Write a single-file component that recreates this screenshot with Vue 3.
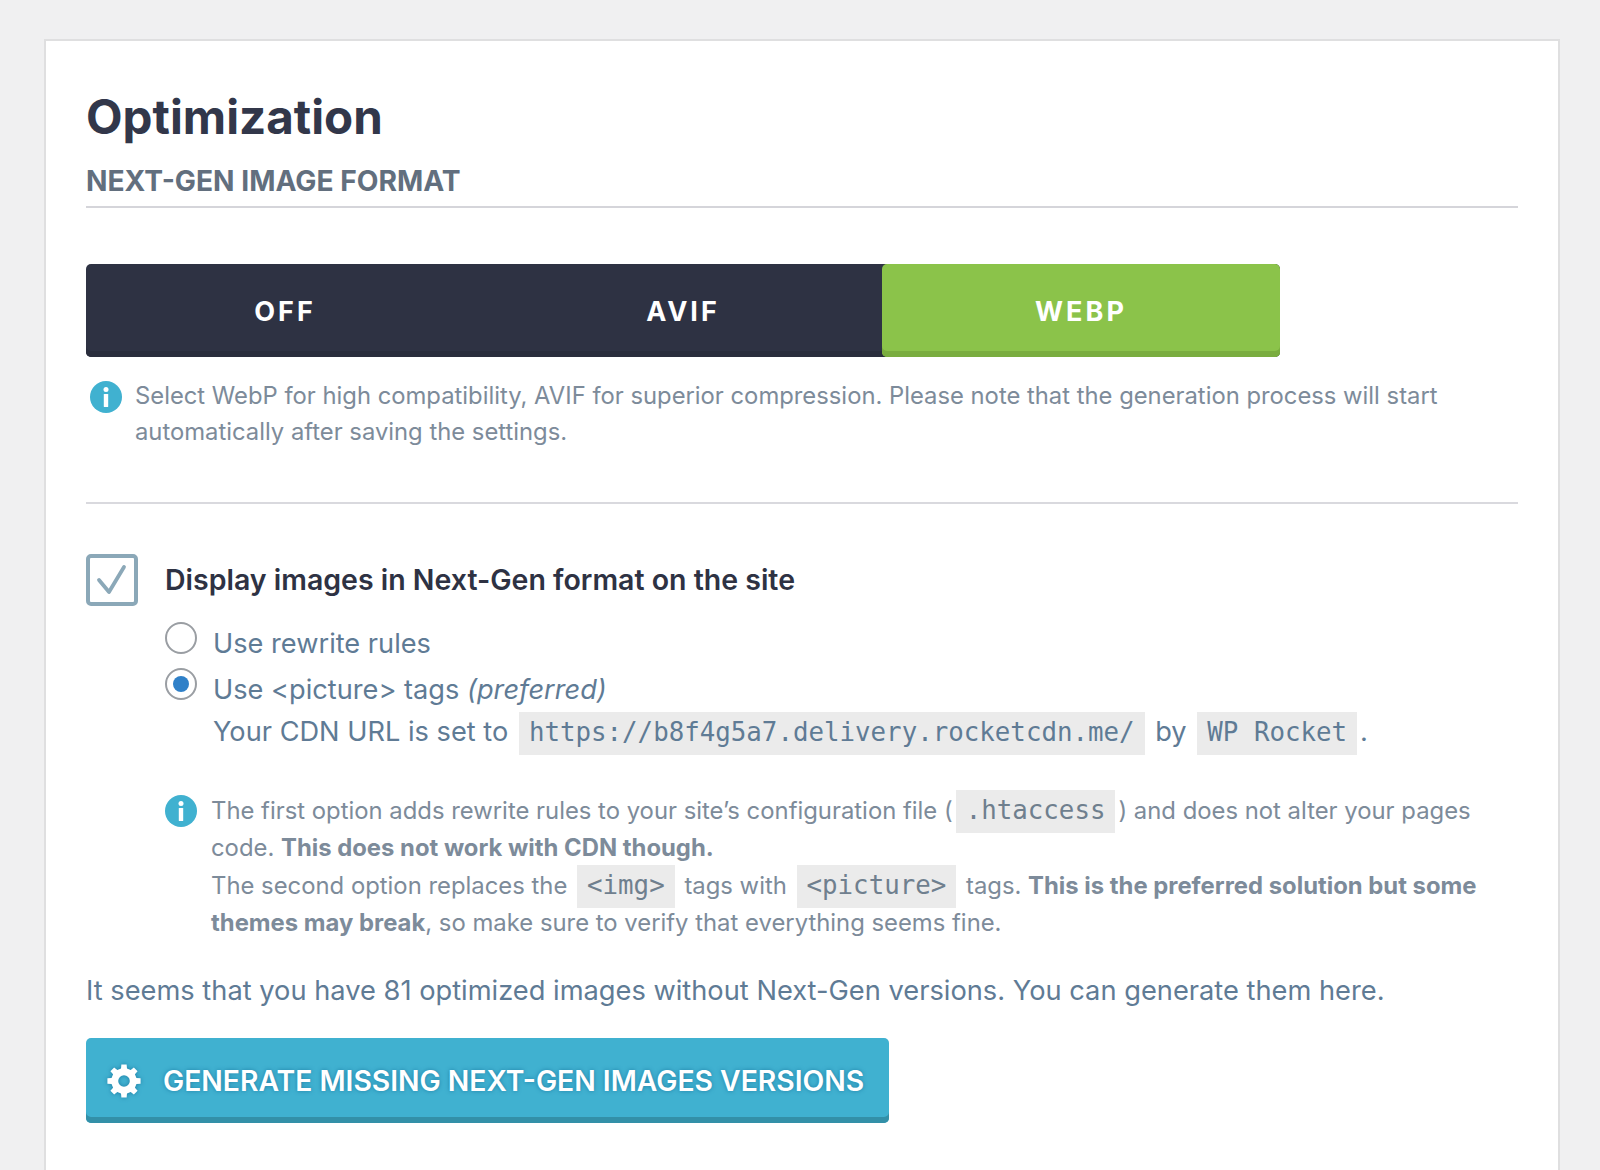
<script setup>
const teeth = 8
const pts = []
for (let i = 0; i < teeth; i++) {
  const a = (i / teeth) * Math.PI * 2 - Math.PI / 2
  const step = (Math.PI * 2) / teeth
  const at = (r, d) => `${(18 + r * Math.cos(a + d)).toFixed(2)} ${(18 + r * Math.sin(a + d)).toFixed(2)}`
  pts.push(at(12.8, -step * 0.30), at(16.8, -step * 0.20), at(16.8, step * 0.20), at(12.8, step * 0.30))
}
const gear = `M${pts.join('L')}Z M18 12.2a5.8 5.8 0 1 0 0 11.6a5.8 5.8 0 1 0 0-11.6Z`
</script>

<template>
  <div class="page">
    <section class="card">
      <h1 class="title">Optimization</h1>
      <h2 class="subtitle">NEXT-GEN IMAGE FORMAT</h2>

      <div class="switcher">
        <div class="seg">OFF</div>
        <div class="seg">AVIF</div>
        <div class="seg seg-on">WEBP</div>
      </div>

      <div class="info">
        <svg class="info-icon" viewBox="0 0 32 32"><circle cx="16" cy="16" r="16" fill="#40b1d0"/><circle cx="16" cy="8.6" r="2.5" fill="#fff"/><rect x="13.8" y="13" width="4.4" height="13" rx="0.6" fill="#fff"/></svg>
        <p class="info-text">Select WebP for high compatibility, AVIF for superior compression. Please note that the generation process will start automatically after saving the settings.</p>
      </div>

      <hr class="rule" />

      <div class="check-row">
        <span class="checkbox">
          <svg viewBox="0 0 44 44" width="44" height="44"><path d="M9 22 L19 34 L34 9" fill="none" stroke="#8ba8b8" stroke-width="3.8" stroke-linecap="round" stroke-linejoin="round"/></svg>
        </span>
        <span class="check-label">Display images in Next-Gen format on the site</span>
      </div>

      <div class="options">
        <div class="option"><span class="radio"></span><span>Use rewrite rules</span></div>
        <div class="option"><span class="radio radio-on"></span><span>Use &lt;picture&gt; tags <em>(preferred)</em></span></div>
        <div class="cdn">Your CDN URL is set to <code class="code">https://b8f4g5a7.delivery.rocketcdn.me/</code> by <code class="code">WP Rocket</code>.</div>
      </div>

      <div class="info info-2">
        <svg class="info-icon" viewBox="0 0 32 32"><circle cx="16" cy="16" r="16" fill="#40b1d0"/><circle cx="16" cy="8.6" r="2.5" fill="#fff"/><rect x="13.8" y="13" width="4.4" height="13" rx="0.6" fill="#fff"/></svg>
        <p class="note">The first option adds rewrite rules to your site’s configuration file (<code class="code small">.htaccess</code>) and does not alter your pages code. <strong>This does not work with CDN though.</strong><br />The second option replaces the <code class="code small">&lt;img&gt;</code> tags with <code class="code small">&lt;picture&gt;</code> tags. <strong>This is the preferred solution but some themes may break</strong>, so make sure to verify that everything seems fine.</p>
      </div>

      <p class="summary">It seems that you have 81 optimized images without Next-Gen versions. You can generate them here.</p>

      <button class="generate" type="button">
        <svg class="gear" viewBox="0 0 36 36"><path :d="gear" fill="#fff" fill-rule="evenodd"/></svg>
        <span>GENERATE MISSING NEXT-GEN IMAGES VERSIONS</span>
      </button>
    </section>
  </div>
</template>

<style>
html, body { margin: 0; background: #f0f0f1; }
</style>

<style scoped>
.page {
  height: 1170px;
  padding: 39px 40px 0 44px;
  box-sizing: border-box;
  overflow: hidden;
  font-family: Inter, "Liberation Sans", sans-serif;
}
.card {
  background: #fff;
  border: 2px solid #dfdfe0;
  border-bottom: 0;
  height: 1131px;
  box-sizing: border-box;
  padding: 48px 40px 0;
}
.title {
  margin: 0;
  font-size: 47.5px;
  line-height: 56px;
  font-weight: 700;
  color: #32374a;
}
.subtitle {
  margin: 20px 0 0;
  padding-bottom: 9px;
  font-size: 28.2px;
  line-height: 32px;
  font-weight: 700;
  color: #626f7e;
  border-bottom: 2px solid #d5d5da;
}
.switcher {
  display: flex;
  width: 1194px;
  height: 93px;
  margin-top: 56px;
  background: #2e3243;
  border-radius: 5px;
  box-shadow: inset 0 -6px 0 #292d3c;
}
.seg {
  flex: 1;
  display: flex;
  align-items: center;
  justify-content: center;
  padding-top: 2px;
  font-size: 27px;
  font-weight: 700;
  letter-spacing: 3px;
  color: #fff;
  border-radius: 5px;
}
.seg-on {
  background: #8bc34a;
  box-shadow: inset 0 -6px 0 #7aad3f;
}
.info {
  display: flex;
  gap: 13px;
  margin: 21px 0 0 4px;
}
.info-icon {
  width: 32px;
  height: 32px;
  flex: none;
  margin-top: 3px;
}
.info-text {
  margin: 0;
  font-size: 23.8px;
  line-height: 36px;
  color: #7d8b9a;
}
.rule {
  margin: 52px 0 0;
  border: 0;
  border-top: 2px solid #d9d9de;
}
.check-row {
  display: flex;
  align-items: center;
  gap: 27px;
  margin-top: 49px;
}
.checkbox {
  width: 44px;
  height: 44px;
  flex: none;
  border: 4px solid #8ba8b8;
  border-radius: 5px;
  margin: 1px 0 -1px;
}
.checkbox svg { display: block; }
.check-label {
  font-size: 28.5px;
  font-weight: 600;
  color: #2e3243;
}
.options {
  margin: 15px 0 0 79px;
  font-size: 27.2px;
  color: #5f7b95;
}
.option {
  display: flex;
  gap: 16px;
  height: 46px;
  align-items: center;
}
.radio {
  width: 28px;
  height: 28px;
  flex: none;
  border: 2px solid #9a9ea3;
  border-radius: 50%;
  position: relative;
  top: -5px;
}
.radio-on::after {
  content: "";
  position: absolute;
  inset: 6px;
  border-radius: 50%;
  background: #2f80c8;
}
.cdn {
  margin: -1px 0 0 48px;
  line-height: 42px;
}
.code {
  font-family: "DejaVu Sans Mono", "Liberation Mono", monospace;
  font-size: 25.8px;
  background: #ebebeb;
  padding: 5px 10px 8px;
  margin: 0 3px;
}
.info-2 {
  gap: 14px;
  margin: 39px 0 0 79px;
}
.note {
  margin: 0;
  font-size: 23.85px;
  line-height: 37.3px;
  color: #7d8b9a;
}
.code.small { color: #6f7f8e; }
.summary {
  margin: 30px 0 0;
  font-size: 27.25px;
  line-height: 40px;
  color: #5f7b95;
}
.generate {
  display: flex;
  align-items: center;
  gap: 21px;
  width: 803px;
  height: 85px;
  margin-top: 27px;
  padding: 0 0 0 20px;
  border: 0;
  border-radius: 5px;
  background: #40b1d0;
  box-shadow: inset 0 -6px 0 #3390a8;
  font-family: inherit;
  font-size: 28.3px;
  font-weight: 600;
  color: #fff;
  text-shadow: 0 0 4px #1f7fa6;
}
.gear {
  width: 36px;
  height: 36px;
  flex: none;
  filter: drop-shadow(0 0 2px #1f7fa6);
}
</style>
